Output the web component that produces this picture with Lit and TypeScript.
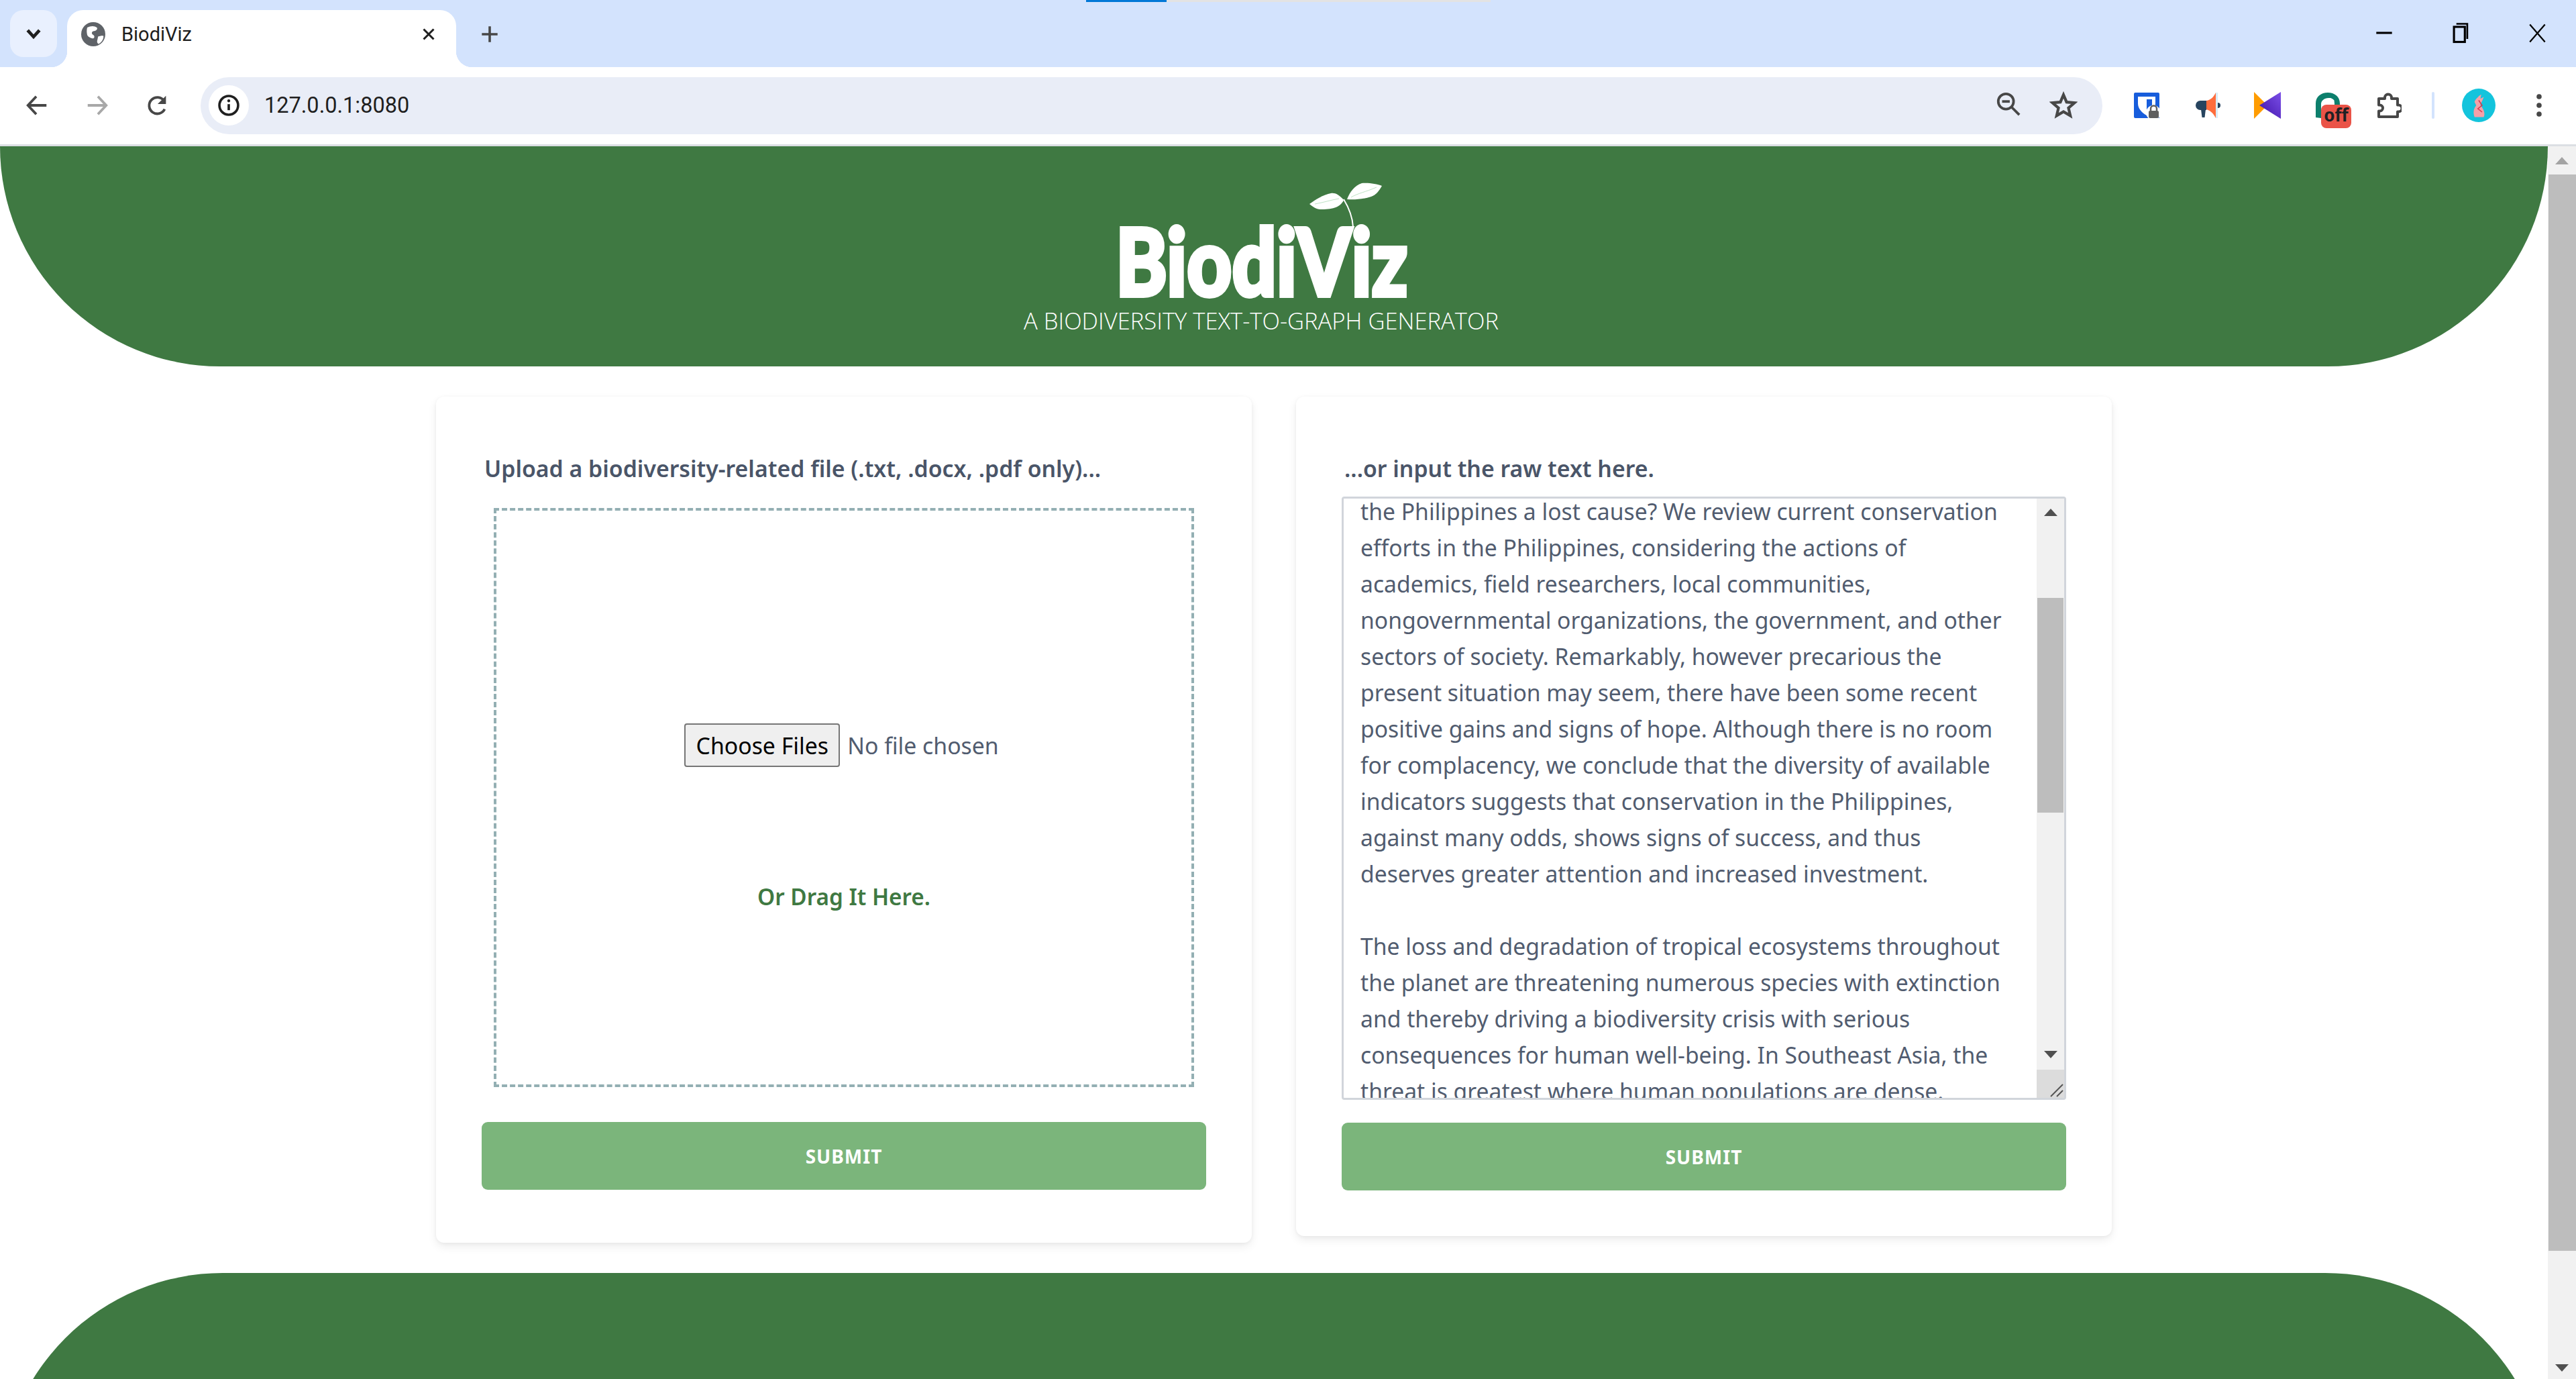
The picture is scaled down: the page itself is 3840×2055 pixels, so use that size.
import { LitElement, html, css, svg } from "lit";
import { customElement } from "lit/decorators.js";

const LINES = [
  "the Philippines a lost cause? We review current conservation",
  "efforts in the Philippines, considering the actions of",
  "academics, field researchers, local communities,",
  "nongovernmental organizations, the government, and other",
  "sectors of society. Remarkably, however precarious the",
  "present situation may seem, there have been some recent",
  "positive gains and signs of hope. Although there is no room",
  "for complacency, we conclude that the diversity of available",
  "indicators suggests that conservation in the Philippines,",
  "against many odds, shows signs of success, and thus",
  "deserves greater attention and increased investment.",
  "",
  "The loss and degradation of tropical ecosystems throughout",
  "the planet are threatening numerous species with extinction",
  "and thereby driving a biodiversity crisis with serious",
  "consequences for human well-being. In Southeast Asia, the",
  "threat is greatest where human populations are dense.",
];

const icon = (size: number, body: unknown) => html`<svg width=${size} height=${size} viewBox="0 0 40 40">${body}</svg>`;

const ICONS = {
  chevron: svg`<path d="M9 14l11 12 11-12" fill="none" stroke="#1f1f1f" stroke-width="6"/>`,
  close: svg`<path d="M10 10l20 20M30 10L10 30" stroke="#1f1f1f" stroke-width="4"/>`,
  plus: svg`<path d="M20 7v26M7 20h26" stroke="#474747" stroke-width="4"/>`,
  back: svg`<path d="M35 20H7M19 6L6 20l13 14" fill="none" stroke="#474747" stroke-width="4"/>`,
  forward: svg`<path d="M5 20h28M21 6l13 14-13 14" fill="none" stroke="#a8a8a8" stroke-width="4"/>`,
  reload: svg`<path d="M31 26a12.800 12.800 0 1 1-1-13" fill="none" stroke="#474747" stroke-width="4"/><path d="M33 5v13H20z" fill="#474747"/>`,
  info: svg`<circle cx="20" cy="20" r="15.500" fill="none" stroke="#1f1f1f" stroke-width="4"/><path d="M20 18v10" stroke="#1f1f1f" stroke-width="4"/><circle cx="20" cy="12.500" r="2.400" fill="#1f1f1f"/>`,
  zoomOut: svg`<circle cx="16" cy="16" r="12" fill="none" stroke="#474747" stroke-width="4"/><path d="M10 16h12" stroke="#474747" stroke-width="4"/><path d="M25 25l12 12" stroke="#474747" stroke-width="4"/>`,
  star: svg`<path d="M20 5l4.400 10.400 11.200 1-8.500 7.300 2.600 11L20 29l-9.700 5.700 2.600-11-8.500-7.300 11.200-1z" fill="none" stroke="#474747" stroke-width="4"/>`,
  shield: svg`<path d="M1 3a2 2 0 0 1 2-2h34a2 2 0 0 1 2 2v36H3a2 2 0 0 1-2-2z" fill="#175ddc"/><path d="M7 7h26v10c0 8-6 14-13 18-7-4-13-10-13-18z" fill="#fff"/><path d="M20 11h8v8c0 5-4 8-8 11z" fill="#175ddc"/><circle cx="30" cy="31" r="11" fill="#fff"/><rect x="23" y="28" width="15" height="11" rx="2" fill="#5f5f5f"/><path d="M26 28v-3a4.500 4.500 0 0 1 9 0v3" fill="none" stroke="#5f5f5f" stroke-width="2.500"/>`,
  horn: svg`<path d="M19 13h-9a7 7 0 0 0 0 14h9z" fill="#27445f"/><path d="M11 26h7l-1.500 12h-4z" fill="#27445f"/><path d="M19 13c7-1 11-6 14-12v38c-3-6-7-11-14-13z" fill="#ff6d3d"/><rect x="33" y="1" width="3" height="38" fill="#d8ecf7"/><path d="M36 16a4 4 0 0 1 0 8z" fill="#27445f"/>`,
  kotlin: svg`<defs><linearGradient id="kg" x1="0" y1="1" x2="1" y2="0"><stop offset="0" stop-color="#3f12a8"/><stop offset="1" stop-color="#7b4fe8"/></linearGradient></defs><path d="M0 0l20 20L0 40z" fill="#ff9c00"/><path d="M40 0v40L8 20z" fill="url(#kg)"/>`,
  hook: svg`<path d="M2 38V17C2 7 10 1 20 1s18 6 18 16v5h-8v-5c0-5-4-8-9-8-6 0-11 4-11 9v21z" fill="#0c7f6c"/><path d="M21 9c5 0 8 2 9 5l-5 1z" fill="#fff"/>`,
  puzzle: svg`<path d="M15 8.500a5 5 0 0 1 10 0V10h9v9.500h1.500a5 5 0 0 1 0 10H34V37H6v-8.500h1.500a4.500 4.500 0 0 0 0-9H6V10h9z" fill="none" stroke="#474747" stroke-width="4" stroke-linejoin="round"/>`,
  rabbit: svg`<circle cx="20" cy="20" r="20" fill="#13c4dc"/><path d="M15 34c-2-6-1-10 2-14l-2-4c1-4 4-5 5-7l3-2-1 5 4-2-2 5c-1 2-2 3-2 5 4 4 6 10 4 14z" fill="#f4a0a8"/><path d="M20 14l4 6-5 4 5 4" fill="none" stroke="#d8364a" stroke-width="1.200"/>`,
  restore: svg`<path d="M13 6h18v25" fill="none" stroke="#000" stroke-width="3" transform="translate(0 -1)"/><rect x="9" y="10" width="18" height="25" fill="none" stroke="#000" stroke-width="3.500"/>`,
  winClose: svg`<path d="M8 6l25 29M33 6L8 35" stroke="#000" stroke-width="2.500"/>`,
  min: svg`<path d="M7 20h26" stroke="#000" stroke-width="3.500"/>`,
  dots: svg`<circle cx="20" cy="7" r="3.800" fill="#474747"/><circle cx="20" cy="20" r="3.800" fill="#474747"/><circle cx="20" cy="33" r="3.800" fill="#474747"/>`,
  globe: svg`<circle cx="20" cy="20" r="20" fill="#5f6368"/><path d="M10 9c6-3 12-3 16 0 2 3-2 6-6 6-3 1-3 5 0 6 3 2 2 6-1 6-4-1-8-3-9-6-1-4-1-8 0-12zM28 24c3-1 7-2 9-1 0 6-3 10-8 13-3-1-3-4-2-7z" fill="#fff"/>`,
};

@customElement("browser-chrome")
class BrowserChrome extends LitElement {
  static styles = css`
    :host { display: block; flex: none; font-family: "Roboto", "Liberation Sans", sans-serif; }
    .strip { height: 100px; background: #d3e3fd; display: flex; position: relative; }
    .progress { position: absolute; top: 0; left: 1619px; height: 3px; width: 603px; background: #e3e3e3; }
    .progress i { display: block; width: 120px; height: 3px; background: #0078d7; }
    .search { width: 70px; height: 70px; margin: 15px 0 0 15px; border-radius: 20px; background: #e9f0fe; display: flex; align-items: center; justify-content: center; }
    .tab { position: relative; width: 580px; height: 85px; margin: 15px 0 0 15px; background: #fff; border-radius: 24px 24px 0 0; display: flex; align-items: center; padding: 0 26px 14px 21px; box-sizing: border-box; }
    .tab::before, .tab::after { content: ""; position: absolute; bottom: 0; width: 24px; height: 24px; }
    .tab::before { left: -24px; background: radial-gradient(circle at 0 0, transparent 24px, #fff 24.500px); }
    .tab::after { right: -24px; background: radial-gradient(circle at 100% 0, transparent 24px, #fff 24.500px); }
    .title { margin-left: 24px; flex: 1; font-size: 29px; color: #1f1f1f; }
    .plus { margin: 33px 0 0 32px; height: 36px; }
    .window { margin-left: auto; display: flex; align-items: flex-start; padding: 31px 40px 0 0; gap: 78px; }
    .toolbar { height: 115px; background: #fff; border-radius: 24px 24px 0 0; display: flex; align-items: center; padding-bottom: 1px; box-sizing: border-box; }
    .nav { width: 90px; display: flex; justify-content: center; }
    .nav:first-child { margin-left: 10px; }
    .omni { width: 2835px; height: 85px; margin: 0 -4px 0 19px; border-radius: 43px; background: #e9edf7; display: flex; align-items: center; padding: 0 37px 0 12px; box-sizing: border-box; }
    .bubble { width: 60px; height: 60px; border-radius: 50%; background: #fff; display: flex; align-items: center; justify-content: center; }
    .url { margin-left: 23px; font-size: 32.500px; color: #1f1f1f; flex: 1; }
    .omni .zoom { margin-right: 42px; }
    .ext { width: 40px; height: 40px; margin-left: 50px; position: relative; flex: none; }
    .off { position: absolute; left: 10px; top: 19px; width: 45px; height: 35px; border-radius: 8px; background: #ea5347; color: #202124; font: 700 26px/30px "Noto Sans", sans-serif; text-align: center; }
    .sep { width: 4px; height: 40px; margin-left: 45px; background: #d3e3fd; border-radius: 2px; }
    .avatar { margin-left: 41px; height: 50px; }
    .more { margin-left: 45px; height: 40px; }
    .rule { height: 3px; background: #dcdfe4; }
  `;

  render() {
    return html`
      <div class="strip">
        <div class="progress"><i></i></div>
        <div class="search">${icon(32, ICONS.chevron)}</div>
        <div class="tab">
          ${icon(36, ICONS.globe)}
          <span class="title">BiodiViz</span>
          ${icon(30, ICONS.close)}
        </div>
        <div class="plus">${icon(36, ICONS.plus)}</div>
        <div class="window">
          ${icon(36, ICONS.min)}${icon(36, ICONS.restore)}${icon(36, ICONS.winClose)}
        </div>
      </div>
      <div class="toolbar">
        <div class="nav">${icon(38, ICONS.back)}</div>
        <div class="nav">${icon(38, ICONS.forward)}</div>
        <div class="nav">${icon(38, ICONS.reload)}</div>
        <div class="omni">
          <div class="bubble">${icon(36, ICONS.info)}</div>
          <span class="url">127.0.0.1:8080</span>
          <div class="zoom">${icon(38, ICONS.zoomOut)}</div>
          ${icon(42, ICONS.star)}
        </div>
        <div class="ext">${icon(40, ICONS.shield)}</div>
        <div class="ext">${icon(40, ICONS.horn)}</div>
        <div class="ext">${icon(40, ICONS.kotlin)}</div>
        <div class="ext">${icon(40, ICONS.hook)}<span class="off">off</span></div>
        <div class="ext">${icon(40, ICONS.puzzle)}</div>
        <div class="sep"></div>
        <div class="avatar">${icon(50, ICONS.rabbit)}</div>
        <div class="more">${icon(40, ICONS.dots)}</div>
      </div>
      <div class="rule"></div>
    `;
  }
}

@customElement("app-root")
export class AppRoot extends LitElement {
  static styles = css`
    :host { display: flex; flex-direction: column; height: 2055px; overflow: hidden; background: #fff; font-family: "Noto Sans", "Open Sans", sans-serif; }
    .page { flex: 1; min-height: 0; display: flex; }
    main { flex: 1; min-width: 0; overflow: hidden; display: flex; flex-direction: column; }
    header { flex: none; height: 328px; background: #3f7942; border-radius: 0 0 332px 332px; display: flex; flex-direction: column; align-items: center; padding: 0 38px 0 0; color: #fff; }
    .logo { position: relative; margin-top: 108px; height: 116px; width: 421px; }
    .wordmark { display: block; font: 900 140px/116px "Lato", sans-serif; -webkit-text-stroke: 6px #fff; white-space: nowrap; transform: translate(-7px, 3px) scaleX(0.83); transform-origin: 0 50%; }
    .sprout { position: absolute; left: 270px; top: -56px; }
    .tagline { font-size: 34.600px; line-height: 40px; font-weight: 300; margin-top: 16px; white-space: nowrap; font-family: "Open Sans", sans-serif; }
    .cards { flex: none; margin-top: 45px; display: flex; justify-content: center; align-items: flex-start; gap: 66px; }
    .card { width: 1216px; box-sizing: border-box; background: #fff; border-radius: 12px; padding: 80px 68px 68px; box-shadow: 0 6px 14px rgba(0, 0, 0, 0.07), 0 1px 5px rgba(0, 0, 0, 0.05); }
    .card.upload { padding-bottom: 79px; }
    .label { display: block; margin: 0 0 32px 4px; font-size: 33.800px; line-height: 54px; font-weight: 600; color: #4a5568; }
    .drop { height: 863px; box-sizing: border-box; margin: 0 18px; border: 4px dashed #93afb3; display: flex; flex-direction: column; align-items: center; color: #515c6f; }
    .file { margin-top: 317px; display: flex; align-items: center; font-size: 33.800px; margin-left: -7px; }
    .choose { height: 65px; width: 232px; box-sizing: border-box; background: #efefef; border: 2px solid #767676; border-radius: 4px; font: inherit; color: #000; padding: 0; margin-right: 11px; }
    .drag { margin-top: 166px; font-size: 33.300px; line-height: 54px; font-weight: 600; color: #3f7942; }
    .submit { display: block; width: 100%; height: 101px; margin-top: 52px; border: none; border-radius: 9px; background: #7bb57b; color: #fff; font: 700 28px/1 "Noto Sans", sans-serif; letter-spacing: 1px; padding: 0; }
    .area { height: 899px; box-sizing: border-box; border: 3px solid #d1d5db; border-radius: 4px; display: flex; margin-top: -17px; }
    .area + .submit { margin-top: 34px; }
    .area-text { flex: 1; min-width: 0; overflow: hidden; padding: 0 0 0 25px; color: #515c6f; font-size: 33.700px; line-height: 54px; white-space: pre; }
    .area-text div { height: 54px; position: relative; top: -8px; }
    .bar { flex: none; display: flex; flex-direction: column; background: #f1f1f1; }
    .area .bar { width: 41px; }
    .arrow { flex: none; height: 40px; display: flex; align-items: center; justify-content: center; }
    .arrow svg { display: block; }
    .spacer { flex: none; }
    .thumb { flex: none; background: #bdbdbd; margin: 0 1px; }
    .resizer { flex: none; margin-top: 3px; height: 42px; background: #dcdcdc; display: flex; align-items: flex-end; justify-content: flex-end; }
    .page-bar { flex: none; width: 42px; }
    .page-bar .thumb { margin: 0 0 0 1px; }
    .page-bar .arrow:first-child { height: 42px; }
    .page-bar .arrow:last-child { height: 34px; }
    .page-bar .arrow:first-child polygon { fill: #a3a3a3; }
    footer { flex: none; height: 500px; margin-top: 45px; background: #3f7942; border-radius: 332px 332px 0 0; }
  `;

  private arrow(down: boolean) {
    const pts = down ? "0,0 20,0 10,11" : "0,11 20,11 10,0";
    return html`<div class="arrow"><svg width="20" height="11" viewBox="0 0 20 11"><polygon points=${pts} fill="#505050"></polygon></svg></div>`;
  }

  render() {
    return html`
      <browser-chrome></browser-chrome>
      <div class="page">
        <main>
          <header>
            <div class="logo">
              <span class="wordmark">BiodiViz</span>
              <svg class="sprout" width="130" height="80" viewBox="0 0 130 80" fill="#fff">
                <path d="M77 68C76 52 71 40 63 27" fill="none" stroke="#fff" stroke-width="2"></path>
                <path d="M63 28C56 20 50 17 44 18C33 20 20 28 12 34C17 38 22 42 28 42C44 42 58 40 63 28Z"></path>
                <path d="M68 27C72 16 80 6 90 3C100 2 112 4 120 7C116 14 112 20 104 23C92 27 78 28 68 27Z"></path>
                <path d="M20 34C32 32 44 28 56 26M74 24C84 18 96 16 112 9" fill="none" stroke="#bfe3c6" stroke-width="1"></path>
              </svg>
            </div>
            <div class="tagline">A BIODIVERSITY TEXT-TO-GRAPH GENERATOR</div>
          </header>
          <div class="cards">
            <section class="card upload">
              <label class="label">Upload a biodiversity-related file (.txt, .docx, .pdf only)...</label>
              <div class="drop">
                <div class="file"><button class="choose">Choose Files</button><span>No file chosen</span></div>
                <div class="drag">Or Drag It Here.</div>
              </div>
              <button class="submit">SUBMIT</button>
            </section>
            <section class="card">
              <label class="label">...or input the raw text here.</label>
              <div class="area">
                <div class="area-text">${LINES.map((l) => html`<div>${l}</div>`)}</div>
                <div class="bar">
                  ${this.arrow(false)}
                  <div class="spacer" style="height: 108px"></div>
                  <div class="thumb" style="height: 320px"></div>
                  <div class="spacer" style="height: 340px"></div>
                  ${this.arrow(true)}
                  <div class="resizer">
                    <svg width="22" height="22" viewBox="0 0 22 22"><path d="M2 20L20 2M11 20l9-9" stroke="#555" stroke-width="2"></path></svg>
                  </div>
                </div>
              </div>
              <button class="submit">SUBMIT</button>
            </section>
          </div>
          <footer></footer>
        </main>
        <aside class="bar page-bar">
          ${this.arrow(false)}
          <div class="thumb" style="height: 1604px"></div>
          <div class="spacer" style="flex: 1"></div>
          ${this.arrow(true)}
        </aside>
      </div>
    `;
  }
}
